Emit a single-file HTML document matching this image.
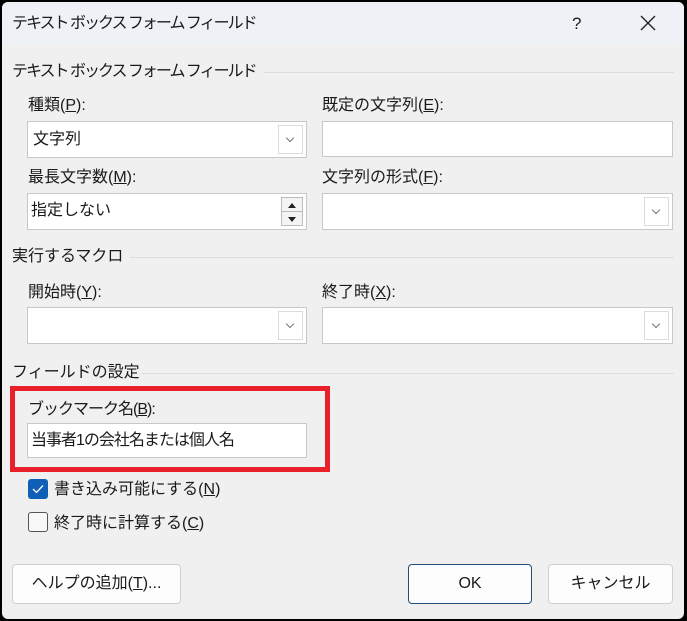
<!DOCTYPE html>
<html><head><meta charset="utf-8"><style>
*{box-sizing:border-box;margin:0;padding:0}
body{width:687px;height:621px;background:#000;position:relative;overflow:hidden;font-family:"Liberation Sans","Noto Sans CJK JP",sans-serif;font-size:16px;color:#1a1a1a}
.win{position:absolute;left:2px;top:2px;width:682px;height:617px;background:#f0f0f0;border-radius:6px;overflow:hidden}
.title{position:absolute;left:0;top:0;width:100%;height:43px;background:#eef2f6}
.a{position:absolute;white-space:nowrap;line-height:20px}
.k{letter-spacing:-2px}
.box{position:absolute;background:#fff;border:1px solid #c8c8c8}
.line{position:absolute;height:1px;background:#dcdcdc}
.dd{position:absolute;width:25px;top:3px;bottom:3px;right:3px;border:1px solid #dcdcdc;background:#fff}
.dd:after{content:"";position:absolute;left:8px;top:9px;width:5px;height:5px;border-right:1px solid #777;border-bottom:1px solid #777;transform:rotate(45deg)}
.btn{position:absolute;background:#fdfdfd;border:1px solid #d0d0d0;border-radius:4px;text-align:center;line-height:38px}
u{text-decoration:underline}
</style></head><body><div class="win">
<div class="title"></div>
<div class="a k" style="left:10px;top:12px">テキスト ボックス フォーム フィールド</div>
<div class="a" style="left:570px;top:12px;font-size:17px">?</div>
<svg style="position:absolute;left:638px;top:13px" width="16" height="16"><path d="M1 1L15 15M15 1L1 15" stroke="#222" stroke-width="1.4"/></svg>
<div class="a k" style="left:10px;top:60px">テキスト ボックス フォーム フィールド</div>
<div class="line" style="left:262px;top:70px;width:410px"></div>
<div class="a" style="left:26px;top:94px">種類(<u>P</u>):</div>
<div class="a" style="left:320px;top:94px">既定の文字列(<u>E</u>):</div>
<div class="box" style="left:25px;top:119px;width:280px;height:37px"><div class="a" style="left:5px;top:8px">文字列</div><div class="dd"></div></div>
<div class="box" style="left:320px;top:119px;width:351px;height:36px"></div>
<div class="a" style="left:26px;top:166px">最長文字数(<u>M</u>):</div>
<div class="a" style="left:320px;top:166px">文字列の形式(<u>F</u>):</div>
<div class="box" style="left:25px;top:191px;width:280px;height:37px"><div class="a" style="left:3px;top:7px">指定しない</div>
<div style="position:absolute;right:3px;top:3px;width:22px;height:29px;border:1px solid #bbb;background:#f4f4f4"><div style="position:absolute;left:0;right:0;top:13px;height:1px;background:#bbb"></div><svg style="position:absolute;left:5px;top:3px" width="10" height="24"><path d="M1 7L5 2L9 7Z M1 16L9 16L5 21Z" fill="#222"/></svg></div></div>
<div class="box" style="left:320px;top:191px;width:351px;height:37px"><div class="dd"></div></div>
<div class="a" style="left:10px;top:245px">実行するマクロ</div>
<div class="line" style="left:128px;top:255px;width:544px"></div>
<div class="a" style="left:26px;top:281px">開始時(<u>Y</u>):</div>
<div class="a" style="left:320px;top:281px">終了時(<u>X</u>):</div>
<div class="box" style="left:25px;top:305px;width:280px;height:37px"><div class="dd"></div></div>
<div class="box" style="left:320px;top:305px;width:351px;height:37px"><div class="dd"></div></div>
<div class="a" style="left:10px;top:361px">フィールドの設定</div>
<div class="line" style="left:140px;top:371px;width:532px"></div>
<div style="position:absolute;left:8px;top:384px;width:320px;height:86px;border:5px solid #e8202a"></div>
<div class="a" style="left:26px;top:398px;letter-spacing:-1px">ブックマーク名(<u>B</u>):</div>
<div class="box" style="left:25px;top:421px;width:280px;height:35px"><div class="a" style="left:3px;top:7px;letter-spacing:-1px">当事者1の会社名または個人名</div></div>
<div style="position:absolute;left:26px;top:477px;width:20px;height:20px;background:#0f5fb7;border-radius:3px"><svg width="20" height="20"><path d="M5 10L8.5 13.5L15 6.5" stroke="#fff" stroke-width="1.3" fill="none"/></svg></div>
<div class="a" style="left:52px;top:478px">書き込み可能にする(<u>N</u>)</div>
<div style="position:absolute;left:26px;top:510px;width:20px;height:20px;border:1px solid #555;border-radius:3px;background:#f8f8f8"></div>
<div class="a" style="left:52px;top:512px">終了時に計算する(<u>C</u>)</div>
<div class="btn" style="left:10px;top:562px;width:169px;height:40px">ヘルプの追加(<u>T</u>)...</div>
<div class="btn" style="left:406px;top:562px;width:124px;height:40px;border-color:#1f4f7a">OK</div>
<div class="btn" style="left:546px;top:562px;width:125px;height:40px">キャンセル</div>
</div></body></html>
